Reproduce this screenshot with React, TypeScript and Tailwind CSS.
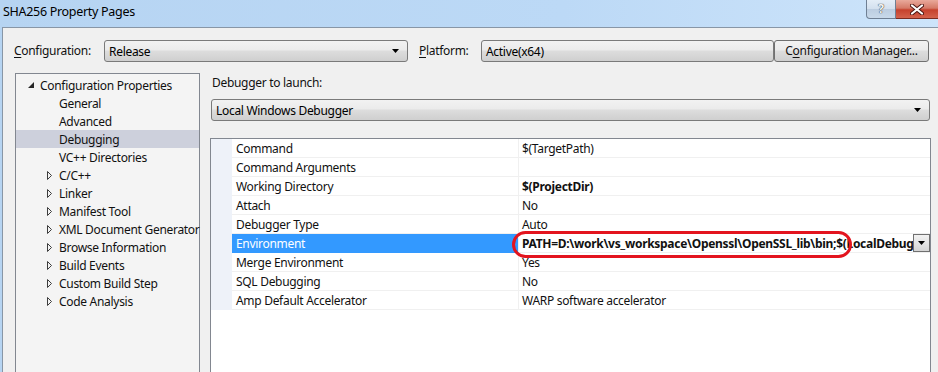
import React from "react";

const font = { fontFamily: '"Noto Sans", "Open Sans", sans-serif', letterSpacing: "-0.3px" };

function Arrow() {
  return (
    <svg width="7" height="4" viewBox="0 0 7 4" className="block">
      <path d="M0 0H7L3.5 4Z" fill="#000" />
    </svg>
  );
}

function Combo({ text, className }: { text: string; className: string }) {
  return (
    <div
      className={`h-[22px] shrink-0 flex items-center justify-between border border-[#7a7a7a] rounded-[3px] bg-[linear-gradient(#f2f2f2_0%,#ebebeb_45%,#dddddd_50%,#cfcfcf_100%)] pl-[4px] pr-[8px] ${className}`}
    >
      <span className="text-[12px] text-[#000] leading-[20px] pt-[1px]">{text}</span>
      <Arrow />
    </div>
  );
}

const treeItems: { label: string; level: number; arrow: "open" | "closed" | "none"; selected?: boolean }[] = [
  { label: "Configuration Properties", level: 0, arrow: "open" },
  { label: "General", level: 1, arrow: "none" },
  { label: "Advanced", level: 1, arrow: "none" },
  { label: "Debugging", level: 1, arrow: "none", selected: true },
  { label: "VC++ Directories", level: 1, arrow: "none" },
  { label: "C/C++", level: 1, arrow: "closed" },
  { label: "Linker", level: 1, arrow: "closed" },
  { label: "Manifest Tool", level: 1, arrow: "closed" },
  { label: "XML Document Generator", level: 1, arrow: "closed" },
  { label: "Browse Information", level: 1, arrow: "closed" },
  { label: "Build Events", level: 1, arrow: "closed" },
  { label: "Custom Build Step", level: 1, arrow: "closed" },
  { label: "Code Analysis", level: 1, arrow: "closed" },
];

const rows: { name: string; value: string; bold?: boolean; env?: boolean }[] = [
  { name: "Command", value: "$(TargetPath)" },
  { name: "Command Arguments", value: "" },
  { name: "Working Directory", value: "$(ProjectDir)", bold: true },
  { name: "Attach", value: "No" },
  { name: "Debugger Type", value: "Auto" },
  { name: "Environment", value: "PATH=D:\\work\\vs_workspace\\Openssl\\OpenSSL_lib\\bin;$(LocalDebuggerEnvironment)", bold: true, env: true },
  { name: "Merge Environment", value: "Yes" },
  { name: "SQL Debugging", value: "No" },
  { name: "Amp Default Accelerator", value: "WARP software accelerator" },
];

export default function App() {
  return (
    <div
      className="w-[938px] h-[372px] overflow-hidden flex flex-col bg-[linear-gradient(90deg,#b6d4f2_0%,#bcd9f6_60%,#cde4fa_100%)] text-[#111]"
      style={font}
    >
      {/* Title bar */}
      <div className="h-[27px] flex items-start justify-between shrink-0">
        <div className="pl-[3px] pt-[4px] text-[12.5px] leading-[16px] text-[#000]">SHA256 Property Pages</div>
        <div className="flex">
          <div className="w-[30px] h-[19px] border border-t-0 border-[#6f7f93] rounded-bl-[4px] bg-[linear-gradient(#e4edf7_0%,#d3e0ee_50%,#bccde0_51%,#c9d9ea_100%)] flex items-center justify-center">
            <span className="text-[12px] font-bold leading-none text-[#f4f6f8]" style={{ textShadow: "0 0 1px #333, 0 0 1px #333" }}>?</span>
          </div>
          <div className="w-[42px] h-[19px] border-b border-[#7a2a20] bg-[linear-gradient(#e9a99b_0%,#d57a68_45%,#c6412d_55%,#d4624c_100%)] flex items-center justify-center">
            <svg width="14" height="11" viewBox="0 0 14 11">
              <path d="M2 1.5L12 9.5M12 1.5L2 9.5" stroke="#4a1410" strokeWidth="4" strokeLinecap="round" />
              <path d="M2 1.5L12 9.5M12 1.5L2 9.5" stroke="#fff" strokeWidth="2.2" strokeLinecap="round" />
            </svg>
          </div>
        </div>
      </div>

      {/* Body */}
      <div className="flex-1 ml-[2px] border-l border-t border-[#8896a6] bg-[#f0f0f0] flex flex-col min-h-0">
        {/* Config row */}
        <div className="flex items-center h-[22px] mt-[12px] shrink-0">
          <div className="w-[101px] shrink-0 pl-[11px] text-[12px] leading-none">
            <span className="underline underline-offset-2">C</span>onfiguration:
          </div>
          <Combo text="Release" className="w-[304px]" />
          <div className="w-[73px] shrink-0 pl-[11px] text-[12px] leading-none">
            <span className="underline underline-offset-2">P</span>latform:
          </div>
          <Combo text="Active(x64)" className="w-[293px] !pr-0 [&>svg]:hidden" />
          <div className="w-[155px] shrink-0 h-[22px] border border-[#707070] rounded-[3px] bg-[linear-gradient(#f2f2f2_0%,#ebebeb_45%,#dddddd_50%,#cfcfcf_100%)] flex items-center justify-center text-[12px] leading-none">
            C<span className="underline underline-offset-2">o</span>nfiguration Manager...
          </div>
        </div>

        {/* Main */}
        <div className="flex flex-1 mt-[11px] min-h-0">
          {/* Tree */}
          <div className="ml-[12px] w-[185px] shrink-0 border border-b-0 border-[#828790] bg-[#f4f4f4] pt-[2px]">
            {treeItems.map((it) => (
              <div
                key={it.label}
                className={`h-[18px] flex items-center text-[12px] leading-[18px] ${it.selected ? "bg-[#cdd0dc]" : ""}`}
              >
                <div className={`${it.level === 0 ? "w-[24px] pl-[12px]" : "w-[43px] pl-[31px]"} shrink-0 flex items-center`}>
                  {it.arrow === "open" && (
                    <svg width="6" height="6" viewBox="0 0 6 6">
                      <path d="M6 0V6H0Z" fill="#262626" />
                    </svg>
                  )}
                  {it.arrow === "closed" && (
                    <svg width="5" height="9" viewBox="0 0 5 9">
                      <path d="M0.5 0.5L4.5 4.5L0.5 8.5Z" fill="none" stroke="#3c3c3c" strokeWidth="1" />
                    </svg>
                  )}
                </div>
                <span className="whitespace-nowrap pt-[1px]">{it.label}</span>
              </div>
            ))}
          </div>

          {/* Right */}
          <div className="ml-[10px] w-[721px] shrink-0 flex flex-col">
            <div className="h-[20px] flex items-center pl-[2px] text-[12px] leading-none">Debugger to launch:</div>
            <Combo text="Local Windows Debugger" className="mt-[6px] ml-[1px] w-[719px]" />
            <div className="relative mt-[17px] flex-1 border border-b-0 border-[#828790] bg-white">
              {rows.map((r) => (
                <div key={r.name} className="h-[19px] flex">
                  <div className="w-[21px] shrink-0 bg-[#eef2f9] border-b border-[#eef2f9]" />
                  <div
                    className={`w-[287px] shrink-0 border-b border-r pl-[4px] pt-[1px] text-[12px] leading-[17px] whitespace-nowrap ${
                      r.env ? "bg-[#3399ff] text-white border-[#3399ff] border-r-[#f0f0f0]" : "border-[#f0f0f0]"
                    }`}
                  >
                    {r.name}
                  </div>
                  <div className="flex-1 min-w-0 border-b border-[#f0f0f0] flex items-start">
                    <span
                      className={`pl-[3px] pt-[1px] flex-1 min-w-0 overflow-hidden whitespace-nowrap text-[12px] leading-[17px] ${
                        r.bold ? "font-bold" : ""
                      }`}
                    >
                      {r.value}
                    </span>
                    {r.env && (
                      <div className="w-[17px] h-[18px] shrink-0 border border-[#707070] bg-[linear-gradient(#f2f2f2_0%,#e4e4e4_50%,#d4d4d4_100%)] flex items-center justify-center">
                        <Arrow />
                      </div>
                    )}
                  </div>
                </div>
              ))}
              {/* red annotation */}
              <div className="absolute left-[301px] top-[92px] w-[340px] h-[27px] border-[3px] border-[#e3141e] rounded-[14px]" />
            </div>
          </div>
        </div>
      </div>
    </div>
  );
}
